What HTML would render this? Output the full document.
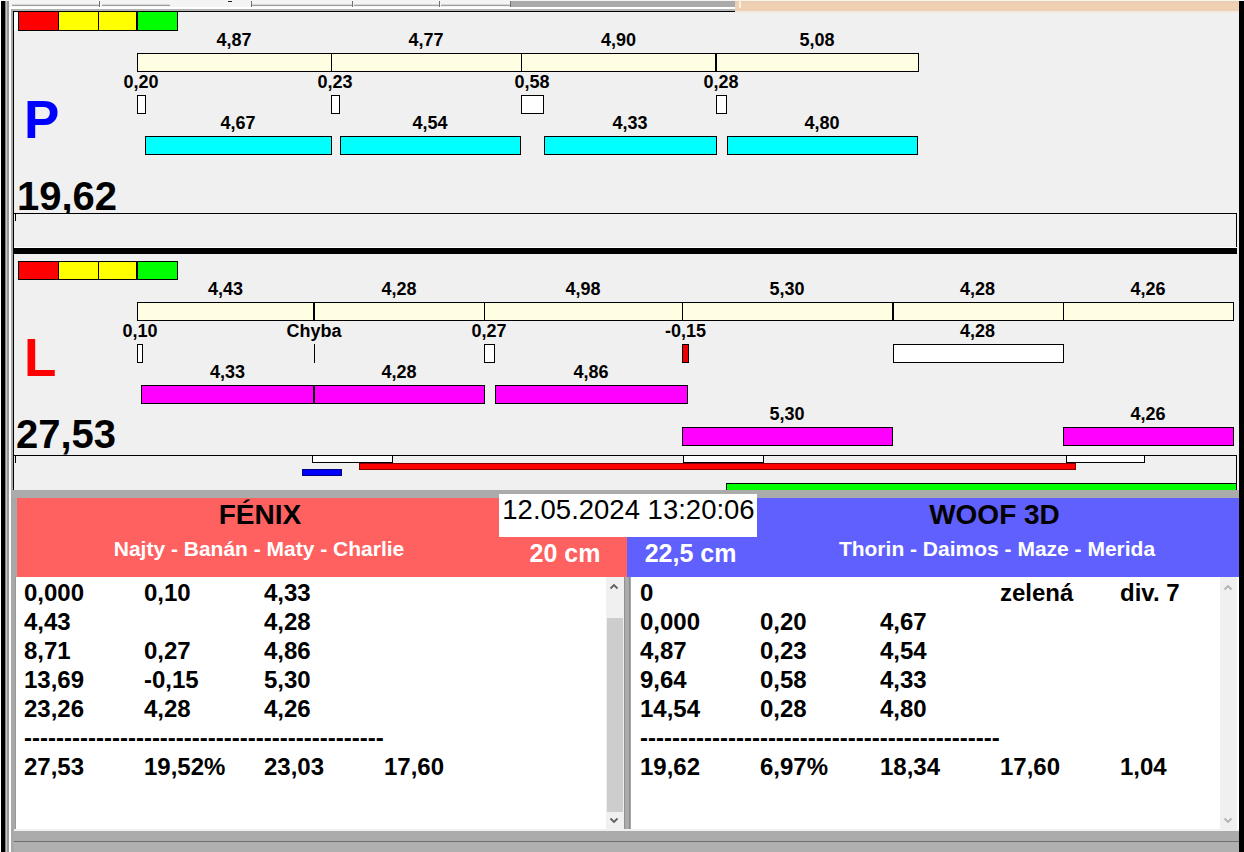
<!DOCTYPE html>
<html><head><meta charset="utf-8"><style>
html,body{margin:0;padding:0;width:1244px;height:852px;overflow:hidden;background:#f0f0f0}
body{position:relative;font-family:"Liberation Sans",sans-serif}
body div{position:absolute;box-sizing:border-box}
.t{white-space:pre}
</style></head><body>
<div style="left:0px;top:0px;width:1244px;height:852px;background:#f0f0f0"></div>
<div style="left:0px;top:0px;width:1244px;height:11px;background:#f4f4f4"></div>
<div style="left:9px;top:7px;width:726px;height:2px;background:#ffffff"></div>
<div style="left:11px;top:9px;width:724px;height:2px;background:#b4b4b4"></div>
<div style="left:511px;top:1px;width:224px;height:6px;background:#aaaaaa"></div>
<div style="left:12px;top:5px;width:87px;height:1px;background:#a0a0a0"></div>
<div style="left:12px;top:4px;width:87px;height:1px;background:#d8d8d8"></div>
<div style="left:102px;top:5px;width:68px;height:1px;background:#a0a0a0"></div>
<div style="left:102px;top:4px;width:68px;height:1px;background:#d8d8d8"></div>
<div style="left:252px;top:5px;width:100px;height:1px;background:#a0a0a0"></div>
<div style="left:252px;top:4px;width:100px;height:1px;background:#d8d8d8"></div>
<div style="left:354px;top:5px;width:85px;height:1px;background:#a0a0a0"></div>
<div style="left:354px;top:4px;width:85px;height:1px;background:#d8d8d8"></div>
<div style="left:441px;top:5px;width:70px;height:1px;background:#a0a0a0"></div>
<div style="left:441px;top:4px;width:70px;height:1px;background:#d8d8d8"></div>
<div style="left:99px;top:1px;width:1px;height:6px;background:#707070"></div>
<div style="left:251px;top:1px;width:1px;height:6px;background:#707070"></div>
<div style="left:352px;top:1px;width:1px;height:6px;background:#707070"></div>
<div style="left:439px;top:1px;width:1px;height:6px;background:#707070"></div>
<div style="left:510px;top:1px;width:1px;height:6px;background:#707070"></div>
<div style="left:228px;top:1px;width:4px;height:1px;background:#202020"></div>
<div style="left:735px;top:0px;width:504px;height:11px;background:#efd0b3"></div>
<div style="left:735px;top:0px;width:504px;height:1px;background:#fbf5e8"></div>
<div style="left:735px;top:1px;width:504px;height:2px;background:#e9ccb4"></div>
<div style="left:735px;top:11px;width:504px;height:2px;background:#f3ebe3"></div>
<div style="left:739px;top:0px;width:2px;height:8px;background:#fbf1dc"></div>
<div style="left:0px;top:0px;width:1px;height:852px;background:#ffffff"></div>
<div style="left:1px;top:1px;width:4px;height:851px;background:#000000"></div>
<div style="left:5px;top:1px;width:1px;height:851px;background:#888888"></div>
<div style="left:6px;top:1px;width:1px;height:851px;background:#c4c4c4"></div>
<div style="left:7px;top:1px;width:2px;height:851px;background:#999999"></div>
<div style="left:9px;top:7px;width:2px;height:845px;background:#ffffff"></div>
<div style="left:11px;top:9px;width:2px;height:843px;background:#a8a8a8"></div>
<div style="left:13px;top:11px;width:1px;height:479px;background:#000000"></div>
<div style="left:1239px;top:1px;width:5px;height:851px;background:#000000"></div>
<div style="left:14px;top:11px;width:721px;height:1px;background:#000"></div>
<div style="left:14px;top:12px;width:4px;height:19px;background:#ffffff"></div>
<div style="left:18px;top:11px;width:41px;height:20px;background:#ff0000;border:1px solid #000;"></div>
<div style="left:58px;top:11px;width:41px;height:20px;background:#ffff00;border:1px solid #000;"></div>
<div style="left:98px;top:11px;width:40px;height:20px;background:#ffff00;border:1px solid #000;"></div>
<div style="left:136px;top:11px;width:42px;height:20px;background:#00ff00;border:1px solid #000;border-left:2px solid #000"></div>
<div style="left:137px;top:53px;width:195px;height:19px;background:#fffee2;border:1px solid #000;"></div>
<div style="left:331px;top:53px;width:191px;height:19px;background:#fffee2;border:1px solid #000;"></div>
<div style="left:521px;top:53px;width:196px;height:19px;background:#fffee2;border:1px solid #000;"></div>
<div style="left:716px;top:53px;width:203px;height:19px;background:#fffee2;border:1px solid #000;"></div>
<div class="t" style="left:-66.0px;width:600px;text-align:center;top:31.00px;font-size:18px;line-height:18px;color:#000;font-weight:bold;">4,87</div>
<div class="t" style="left:126.0px;width:600px;text-align:center;top:31.00px;font-size:18px;line-height:18px;color:#000;font-weight:bold;">4,77</div>
<div class="t" style="left:318.5px;width:600px;text-align:center;top:31.00px;font-size:18px;line-height:18px;color:#000;font-weight:bold;">4,90</div>
<div class="t" style="left:517.0px;width:600px;text-align:center;top:31.00px;font-size:18px;line-height:18px;color:#000;font-weight:bold;">5,08</div>
<div style="left:137px;top:95px;width:9px;height:19px;background:#ffffff;border:1px solid #000;"></div>
<div class="t" style="left:-159.0px;width:600px;text-align:center;top:73.00px;font-size:18px;line-height:18px;color:#000;font-weight:bold;">0,20</div>
<div style="left:331px;top:95px;width:9px;height:19px;background:#ffffff;border:1px solid #000;"></div>
<div class="t" style="left:35.0px;width:600px;text-align:center;top:73.00px;font-size:18px;line-height:18px;color:#000;font-weight:bold;">0,23</div>
<div style="left:521px;top:95px;width:23px;height:19px;background:#ffffff;border:1px solid #000;"></div>
<div class="t" style="left:232.0px;width:600px;text-align:center;top:73.00px;font-size:18px;line-height:18px;color:#000;font-weight:bold;">0,58</div>
<div style="left:716px;top:95px;width:11px;height:19px;background:#ffffff;border:1px solid #000;"></div>
<div class="t" style="left:421.0px;width:600px;text-align:center;top:73.00px;font-size:18px;line-height:18px;color:#000;font-weight:bold;">0,28</div>
<div style="left:145px;top:136px;width:187px;height:19px;background:#00ffff;border:1px solid #000;"></div>
<div class="t" style="left:-62.0px;width:600px;text-align:center;top:114.00px;font-size:18px;line-height:18px;color:#000;font-weight:bold;">4,67</div>
<div style="left:340px;top:136px;width:181px;height:19px;background:#00ffff;border:1px solid #000;"></div>
<div class="t" style="left:130.0px;width:600px;text-align:center;top:114.00px;font-size:18px;line-height:18px;color:#000;font-weight:bold;">4,54</div>
<div style="left:544px;top:136px;width:173px;height:19px;background:#00ffff;border:1px solid #000;"></div>
<div class="t" style="left:330.0px;width:600px;text-align:center;top:114.00px;font-size:18px;line-height:18px;color:#000;font-weight:bold;">4,33</div>
<div style="left:727px;top:136px;width:191px;height:19px;background:#00ffff;border:1px solid #000;"></div>
<div class="t" style="left:522.0px;width:600px;text-align:center;top:114.00px;font-size:18px;line-height:18px;color:#000;font-weight:bold;">4,80</div>
<div style="left:715px;top:53px;width:1px;height:19px;background:#000"></div>
<div class="t" style="left:24px;top:93.00px;font-size:53px;line-height:53px;color:#0000ff;font-weight:bold;">P</div>
<div style="left:14px;top:160px;width:200px;height:53px;overflow:hidden">
<div class="t" style="left:3px;top:16.00px;font-size:40px;line-height:40px;color:#000;font-weight:bold;">19,62</div>
</div>
<div style="left:14px;top:213px;width:1223px;height:1px;background:#000"></div>
<div style="left:1236px;top:213px;width:1px;height:35px;background:#000"></div>
<div style="left:15px;top:214px;width:1px;height:7px;background:#000"></div>
<div style="left:14px;top:247px;width:1223px;height:1px;background:#ffffff"></div>
<div style="left:14px;top:248px;width:1223px;height:6px;background:#000"></div>
<div style="left:18px;top:261px;width:41px;height:19px;background:#ff0000;border:1px solid #000;"></div>
<div style="left:58px;top:261px;width:41px;height:19px;background:#ffff00;border:1px solid #000;"></div>
<div style="left:98px;top:261px;width:40px;height:19px;background:#ffff00;border:1px solid #000;"></div>
<div style="left:136px;top:261px;width:42px;height:19px;background:#00ff00;border:1px solid #000;border-left:2px solid #000"></div>
<div style="left:137px;top:302px;width:178px;height:19px;background:#fffee2;border:1px solid #000;"></div>
<div style="left:314px;top:302px;width:171px;height:19px;background:#fffee2;border:1px solid #000;"></div>
<div style="left:484px;top:302px;width:199px;height:19px;background:#fffee2;border:1px solid #000;"></div>
<div style="left:682px;top:302px;width:211px;height:19px;background:#fffee2;border:1px solid #000;"></div>
<div style="left:892px;top:302px;width:172px;height:19px;background:#fffee2;border:1px solid #000;"></div>
<div style="left:1063px;top:302px;width:171px;height:19px;background:#fffee2;border:1px solid #000;"></div>
<div class="t" style="left:-74.5px;width:600px;text-align:center;top:280.00px;font-size:18px;line-height:18px;color:#000;font-weight:bold;">4,43</div>
<div class="t" style="left:99.0px;width:600px;text-align:center;top:280.00px;font-size:18px;line-height:18px;color:#000;font-weight:bold;">4,28</div>
<div class="t" style="left:283.0px;width:600px;text-align:center;top:280.00px;font-size:18px;line-height:18px;color:#000;font-weight:bold;">4,98</div>
<div class="t" style="left:487.0px;width:600px;text-align:center;top:280.00px;font-size:18px;line-height:18px;color:#000;font-weight:bold;">5,30</div>
<div class="t" style="left:677.5px;width:600px;text-align:center;top:280.00px;font-size:18px;line-height:18px;color:#000;font-weight:bold;">4,28</div>
<div class="t" style="left:848.0px;width:600px;text-align:center;top:280.00px;font-size:18px;line-height:18px;color:#000;font-weight:bold;">4,26</div>
<div style="left:137px;top:344px;width:6px;height:19px;background:#ffffff;border:1px solid #000;"></div>
<div style="left:314px;top:344px;width:1px;height:19px;background:#000"></div>
<div style="left:484px;top:344px;width:11px;height:19px;background:#ffffff;border:1px solid #000;"></div>
<div style="left:682px;top:344px;width:7px;height:19px;background:#ee0000;border:1px solid #000;"></div>
<div style="left:893px;top:344px;width:171px;height:19px;background:#ffffff;border:1px solid #000;"></div>
<div class="t" style="left:-160px;width:600px;text-align:center;top:322.00px;font-size:18px;line-height:18px;color:#000;font-weight:bold;">0,10</div>
<div class="t" style="left:14px;width:600px;text-align:center;top:322.00px;font-size:18px;line-height:18px;color:#000;font-weight:bold;">Chyba</div>
<div class="t" style="left:189px;width:600px;text-align:center;top:322.00px;font-size:18px;line-height:18px;color:#000;font-weight:bold;">0,27</div>
<div class="t" style="left:385.5px;width:600px;text-align:center;top:322.00px;font-size:18px;line-height:18px;color:#000;font-weight:bold;">-0,15</div>
<div class="t" style="left:677.5px;width:600px;text-align:center;top:322.00px;font-size:18px;line-height:18px;color:#000;font-weight:bold;">4,28</div>
<div style="left:141px;top:385px;width:174px;height:19px;background:#ff00ff;border:1px solid #000;"></div>
<div class="t" style="left:-72.5px;width:600px;text-align:center;top:363.00px;font-size:18px;line-height:18px;color:#000;font-weight:bold;">4,33</div>
<div style="left:314px;top:385px;width:171px;height:19px;background:#ff00ff;border:1px solid #000;"></div>
<div class="t" style="left:99.0px;width:600px;text-align:center;top:363.00px;font-size:18px;line-height:18px;color:#000;font-weight:bold;">4,28</div>
<div style="left:495px;top:385px;width:193px;height:19px;background:#ff00ff;border:1px solid #000;"></div>
<div class="t" style="left:291.0px;width:600px;text-align:center;top:363.00px;font-size:18px;line-height:18px;color:#000;font-weight:bold;">4,86</div>
<div style="left:682px;top:427px;width:211px;height:19px;background:#ff00ff;border:1px solid #000;"></div>
<div class="t" style="left:487.0px;width:600px;text-align:center;top:405.00px;font-size:18px;line-height:18px;color:#000;font-weight:bold;">5,30</div>
<div style="left:1063px;top:427px;width:171px;height:19px;background:#ff00ff;border:1px solid #000;"></div>
<div class="t" style="left:848.0px;width:600px;text-align:center;top:405.00px;font-size:18px;line-height:18px;color:#000;font-weight:bold;">4,26</div>
<div style="left:313px;top:302px;width:1px;height:19px;background:#000"></div>
<div style="left:893px;top:302px;width:1px;height:19px;background:#000"></div>
<div style="left:313px;top:385px;width:1px;height:19px;background:#000"></div>
<div class="t" style="left:24px;top:331.00px;font-size:53px;line-height:53px;color:#ff0000;font-weight:bold;">L</div>
<div style="left:14px;top:400px;width:200px;height:55px;overflow:hidden">
<div class="t" style="left:2px;top:14.00px;font-size:40px;line-height:40px;color:#000;font-weight:bold;">27,53</div>
</div>
<div style="left:14px;top:455px;width:1223px;height:1px;background:#000"></div>
<div style="left:1236px;top:455px;width:1px;height:35px;background:#000"></div>
<div style="left:15px;top:456px;width:1px;height:7px;background:#000"></div>
<div style="left:312px;top:455px;width:81px;height:8px;background:#ffffff;border:1px solid #000;"></div>
<div style="left:683px;top:455px;width:81px;height:8px;background:#ffffff;border:1px solid #000;"></div>
<div style="left:1066px;top:455px;width:79px;height:8px;background:#ffffff;border:1px solid #000;"></div>
<div style="left:359px;top:463px;width:717px;height:7px;background:#ff0000;border:1px solid #800000;"></div>
<div style="left:302px;top:469px;width:40px;height:7px;background:#0000ff;border:1px solid #000080;"></div>
<div style="left:726px;top:483px;width:510px;height:7px;background:#00ff00;border:1px solid #000;border-right:0;border-bottom:0"></div>
<div style="left:11px;top:490px;width:1228px;height:8px;background:#ababab"></div>
<div style="left:11px;top:498px;width:6px;height:79px;background:#a8a8a8"></div>
<div style="left:17px;top:498px;width:610px;height:79px;background:#ff6060"></div>
<div style="left:627px;top:498px;width:612px;height:79px;background:#6060ff"></div>
<div style="left:499px;top:494px;width:258px;height:43px;background:#ffffff"></div>
<div class="t" style="left:328.5px;width:600px;text-align:center;top:496.00px;font-size:27.5px;line-height:27.5px;color:#000;font-weight:normal;">12.05.2024 13:20:06</div>
<div class="t" style="left:-40px;width:600px;text-align:center;top:501.00px;font-size:28px;line-height:28px;color:#000;font-weight:bold;">FÉNIX</div>
<div class="t" style="left:-41px;width:600px;text-align:center;top:537.50px;font-size:21px;line-height:21px;color:#ffffff;font-weight:bold;">Najty - Banán - Maty - Charlie</div>
<div class="t" style="left:265px;width:600px;text-align:center;top:540.50px;font-size:25px;line-height:25px;color:#ffffff;font-weight:bold;">20 cm</div>
<div class="t" style="left:694.5px;width:600px;text-align:center;top:501.00px;font-size:28px;line-height:28px;color:#000;font-weight:bold;">WOOF 3D</div>
<div class="t" style="left:697px;width:600px;text-align:center;top:537.50px;font-size:21px;line-height:21px;color:#ffffff;font-weight:bold;">Thorin - Daimos - Maze - Merida</div>
<div class="t" style="left:390.5px;width:600px;text-align:center;top:540.50px;font-size:25px;line-height:25px;color:#ffffff;font-weight:bold;">22,5 cm</div>
<div style="left:11px;top:577px;width:1228px;height:275px;background:#a8a8a8"></div>
<div style="left:16px;top:577px;width:590px;height:253px;background:#ffffff"></div>
<div style="left:606px;top:577px;width:18px;height:253px;background:#f0f0f0"></div>
<div style="left:607px;top:618px;width:16px;height:194px;background:#cdcdcd"></div>
<div style="left:624px;top:577px;width:1px;height:253px;background:#909090"></div>
<div style="left:625px;top:577px;width:5px;height:253px;background:#ababab"></div>
<div style="left:629px;top:577px;width:1px;height:253px;background:#8a8a8a"></div>
<div style="left:631px;top:577px;width:590px;height:253px;background:#ffffff"></div>
<div style="left:15px;top:577px;width:1px;height:253px;background:#989898"></div>
<div style="left:1220px;top:577px;width:17px;height:253px;background:#f0f0f0"></div>
<div style="left:1237px;top:577px;width:2px;height:253px;background:#ffffff"></div>
<div style="left:14px;top:829px;width:1225px;height:2px;background:#f0f0f0"></div>
<div style="left:14px;top:831px;width:1225px;height:10px;background:#ababab"></div>
<div style="left:14px;top:841px;width:1225px;height:1px;background:#6e6e6e"></div>
<div style="left:14px;top:842px;width:1225px;height:10px;background:#b0b0b0"></div>
<div class="t" style="left:24px;top:581.00px;font-size:24px;line-height:24px;color:#000;font-weight:bold;">0,000</div>
<div class="t" style="left:144px;top:581.00px;font-size:24px;line-height:24px;color:#000;font-weight:bold;">0,10</div>
<div class="t" style="left:264px;top:581.00px;font-size:24px;line-height:24px;color:#000;font-weight:bold;">4,33</div>
<div class="t" style="left:24px;top:610.00px;font-size:24px;line-height:24px;color:#000;font-weight:bold;">4,43</div>
<div class="t" style="left:264px;top:610.00px;font-size:24px;line-height:24px;color:#000;font-weight:bold;">4,28</div>
<div class="t" style="left:24px;top:639.00px;font-size:24px;line-height:24px;color:#000;font-weight:bold;">8,71</div>
<div class="t" style="left:144px;top:639.00px;font-size:24px;line-height:24px;color:#000;font-weight:bold;">0,27</div>
<div class="t" style="left:264px;top:639.00px;font-size:24px;line-height:24px;color:#000;font-weight:bold;">4,86</div>
<div class="t" style="left:24px;top:668.00px;font-size:24px;line-height:24px;color:#000;font-weight:bold;">13,69</div>
<div class="t" style="left:144px;top:668.00px;font-size:24px;line-height:24px;color:#000;font-weight:bold;">-0,15</div>
<div class="t" style="left:264px;top:668.00px;font-size:24px;line-height:24px;color:#000;font-weight:bold;">5,30</div>
<div class="t" style="left:24px;top:697.00px;font-size:24px;line-height:24px;color:#000;font-weight:bold;">23,26</div>
<div class="t" style="left:144px;top:697.00px;font-size:24px;line-height:24px;color:#000;font-weight:bold;">4,28</div>
<div class="t" style="left:264px;top:697.00px;font-size:24px;line-height:24px;color:#000;font-weight:bold;">4,26</div>
<div class="t" style="left:24px;top:726.00px;font-size:24px;line-height:24px;color:#000;font-weight:bold;">---------------------------------------------</div>
<div class="t" style="left:24px;top:755.00px;font-size:24px;line-height:24px;color:#000;font-weight:bold;">27,53</div>
<div class="t" style="left:144px;top:755.00px;font-size:24px;line-height:24px;color:#000;font-weight:bold;">19,52%</div>
<div class="t" style="left:264px;top:755.00px;font-size:24px;line-height:24px;color:#000;font-weight:bold;">23,03</div>
<div class="t" style="left:384px;top:755.00px;font-size:24px;line-height:24px;color:#000;font-weight:bold;">17,60</div>
<div class="t" style="left:640px;top:581.00px;font-size:24px;line-height:24px;color:#000;font-weight:bold;">0</div>
<div class="t" style="left:1000px;top:581.00px;font-size:24px;line-height:24px;color:#000;font-weight:bold;">zelená</div>
<div class="t" style="left:1120px;top:581.00px;font-size:24px;line-height:24px;color:#000;font-weight:bold;">div. 7</div>
<div class="t" style="left:640px;top:610.00px;font-size:24px;line-height:24px;color:#000;font-weight:bold;">0,000</div>
<div class="t" style="left:760px;top:610.00px;font-size:24px;line-height:24px;color:#000;font-weight:bold;">0,20</div>
<div class="t" style="left:880px;top:610.00px;font-size:24px;line-height:24px;color:#000;font-weight:bold;">4,67</div>
<div class="t" style="left:640px;top:639.00px;font-size:24px;line-height:24px;color:#000;font-weight:bold;">4,87</div>
<div class="t" style="left:760px;top:639.00px;font-size:24px;line-height:24px;color:#000;font-weight:bold;">0,23</div>
<div class="t" style="left:880px;top:639.00px;font-size:24px;line-height:24px;color:#000;font-weight:bold;">4,54</div>
<div class="t" style="left:640px;top:668.00px;font-size:24px;line-height:24px;color:#000;font-weight:bold;">9,64</div>
<div class="t" style="left:760px;top:668.00px;font-size:24px;line-height:24px;color:#000;font-weight:bold;">0,58</div>
<div class="t" style="left:880px;top:668.00px;font-size:24px;line-height:24px;color:#000;font-weight:bold;">4,33</div>
<div class="t" style="left:640px;top:697.00px;font-size:24px;line-height:24px;color:#000;font-weight:bold;">14,54</div>
<div class="t" style="left:760px;top:697.00px;font-size:24px;line-height:24px;color:#000;font-weight:bold;">0,28</div>
<div class="t" style="left:880px;top:697.00px;font-size:24px;line-height:24px;color:#000;font-weight:bold;">4,80</div>
<div class="t" style="left:640px;top:726.00px;font-size:24px;line-height:24px;color:#000;font-weight:bold;">---------------------------------------------</div>
<div class="t" style="left:640px;top:755.00px;font-size:24px;line-height:24px;color:#000;font-weight:bold;">19,62</div>
<div class="t" style="left:760px;top:755.00px;font-size:24px;line-height:24px;color:#000;font-weight:bold;">6,97%</div>
<div class="t" style="left:880px;top:755.00px;font-size:24px;line-height:24px;color:#000;font-weight:bold;">18,34</div>
<div class="t" style="left:1000px;top:755.00px;font-size:24px;line-height:24px;color:#000;font-weight:bold;">17,60</div>
<div class="t" style="left:1120px;top:755.00px;font-size:24px;line-height:24px;color:#000;font-weight:bold;">1,04</div>
<svg style="position:absolute;left:606px;top:577px" width="18" height="253"><path d="M4.5 11.5 L8 8 L11.5 11.5" stroke="#606060" stroke-width="1.8" fill="none"/><path d="M4.5 241.5 L8 245 L11.5 241.5" stroke="#606060" stroke-width="1.8" fill="none"/></svg>
<svg style="position:absolute;left:1220px;top:577px" width="17" height="253"><path d="M4.5 12.5 L8 9 L11.5 12.5" stroke="#b4b4b4" stroke-width="1.8" fill="none"/><path d="M4.5 241.5 L8 245 L11.5 241.5" stroke="#b4b4b4" stroke-width="1.8" fill="none"/></svg>
</body></html>
